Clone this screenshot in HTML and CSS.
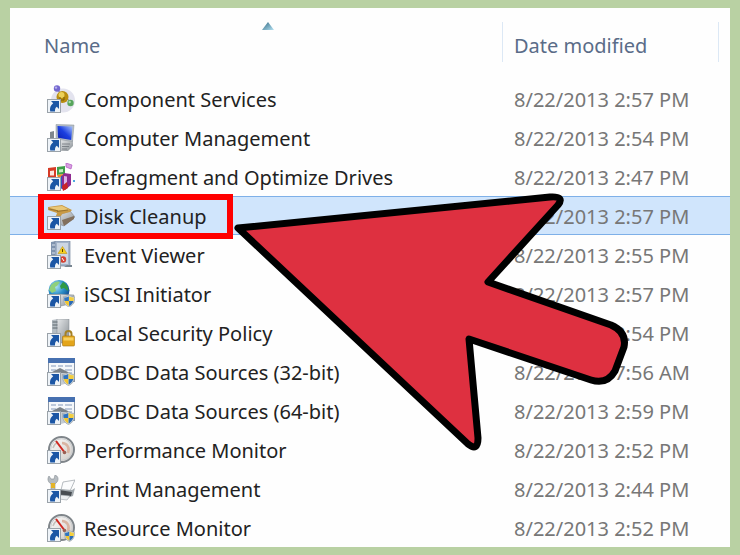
FILE: index.html
```
<!DOCTYPE html>
<html lang="en">
	<head>
		<meta charset="UTF-8">
		<title>Administrative Tools</title>
		<link rel="stylesheet" href="styles.css">
	</head>
	<body>
		<!-- parts shared by the icons -->
		<svg class="defs" width="0" height="0" aria-hidden="true">
			<defs>
				<linearGradient id="metal" x1="0" y1="0" x2="1" y2="1">
					<stop offset="0" stop-color="#e6e8ea"/>
					<stop offset="1" stop-color="#868d92"/>
				</linearGradient>
				<linearGradient id="screen" x1="0" y1="1" x2="1" y2="0">
					<stop offset="0" stop-color="#0a1fb0"/>
					<stop offset="0.5" stop-color="#1b3fe0"/>
					<stop offset="1" stop-color="#a9c4fa"/>
				</linearGradient>
				<linearGradient id="dial" x1="0" y1="0" x2="1" y2="1">
					<stop offset="0" stop-color="#ffffff"/>
					<stop offset="1" stop-color="#cfc9c4"/>
				</linearGradient>
				<radialGradient id="globe" cx="0.35" cy="0.3" r="0.8">
					<stop offset="0" stop-color="#b5e6f5"/>
					<stop offset="0.5" stop-color="#2a8fc9"/>
					<stop offset="1" stop-color="#0d3f86"/>
				</radialGradient>
				<linearGradient id="sort" x1="0" y1="0" x2="1" y2="1">
					<stop offset="0" stop-color="#2f6680"/>
					<stop offset="1" stop-color="#b4e2f3"/>
				</linearGradient>
				<symbol id="shortcut" viewBox="0 0 28 28">
					<rect x="0.5" y="14.5" width="13" height="13" fill="#eef3f8" stroke="#9aa2a9"/>
					<path d="M4 16h8v8l-2.200-2.200c-1.400 1-1.900 2.300-1.800 4.700H3.200c-.7-3.600.3-6.300 3-8.300z" fill="#1b56a5"/>
				</symbol>
				<symbol id="shield" viewBox="0 0 12 12">
					<path d="M6 0c2 1.400 3.800 1.800 5.600 1.800C11.800 7 10 10.500 6 12 2 10.500.2 7 .4 1.800 2.200 1.800 4 1.400 6 0z" fill="#d5dade" stroke="#8e989f" stroke-width="0.6"/>
					<path d="M5.900 1.200v4.800H1.500C1.200 4.800 1.200 4 1.200 2.600 3 2.500 4.400 2.200 5.900 1.200z" fill="#2f74c0"/>
					<path d="M6.100 1.200v4.800h4.400c.3-1.200.3-2 .3-3.400-1.800-.1-3.200-.4-4.700-1.400z" fill="#f4cf3e"/>
					<path d="M5.900 6.100H1.600c.7 2.500 2 4 4.300 5z" fill="#f1c52f"/>
					<path d="M6.100 6.100h4.300c-.7 2.500-2 4-4.300 5z" fill="#2a6ab5"/>
				</symbol>
				<symbol id="component" viewBox="0 0 28 28">
					<ellipse cx="16" cy="15.500" rx="12" ry="12" fill="#e3e3ee"/>
					<path d="M10 4l5 6M19 13l5 4" stroke="#9a9aa8" stroke-width="1.500"/>
					<circle cx="10" cy="3.500" r="3.200" fill="#7468cf"/>
					<circle cx="9" cy="2.600" r="1.200" fill="#b9b3ee"/>
					<circle cx="15.500" cy="12" r="6" fill="#b98d10"/>
					<circle cx="14.500" cy="10" r="3" fill="#ecd058"/>
					<path d="M13 12v3h4v-3" fill="none" stroke="#7d5c06" stroke-width="1"/>
					<circle cx="23.500" cy="18" r="3.200" fill="#57a55c"/>
					<circle cx="22.700" cy="17" r="1.200" fill="#abdca8"/>
				</symbol>
				<symbol id="computer" viewBox="0 0 28 28">
					<path d="M3 8l4-1v7H3z" fill="#7f878d"/>
					<path d="M13 16l13 0v6l-5 5h-8z" fill="url(#metal)"/>
					<path d="M15 20h8M15 22.500h7M15 25h5" stroke="#6e757b" stroke-width="0.8"/>
					<path d="M9 0.500l18 .5-1.500 16.500L9 15z" fill="#b4bcc3" stroke="#8d959b" stroke-width="0.5"/>
					<path d="M10.500 2l15 .5-1.300 13.500-13.200-2.200z" fill="url(#screen)"/>
				</symbol>
				<symbol id="defrag" viewBox="0 0 28 28">
					<path d="M1 5l8-1v10H1z" fill="#d63b26"/>
					<path d="M3 8l4-.5v5H3z" fill="#fbe6df"/>
					<path d="M10 4l8-1v8l-8 1z" fill="#3fa04b"/>
					<path d="M12 6.500l4-.6v3l-4 .6z" fill="#c7edc5"/>
					<path d="M10 12l7-1v8l-4 1z" fill="#f08b22"/>
					<path d="M14 13l6-2v11l-6 4z" fill="#2d55c5"/>
					<path d="M17 10l7 1v11l-6 5-3-1V13z" fill="#8f2b90"/>
					<path d="M17 13l3 .5v7l-3 2z" fill="#dcb4e6"/>
					<path d="M15 23l5-4 1 6-5 3z" fill="#c92626"/>
					<path d="M19 0l6 2-1 4-5-2z" fill="#d79fe0" stroke="#b256c1" stroke-width="0.7"/>
					<path d="M26 17h2v2h-2z" fill="#4fa8e2"/>
				</symbol>
				<symbol id="disk" viewBox="0 0 28 28">
					<path d="M9 14l14-5 5 6-11 9-8-3z" fill="url(#metal)" stroke="#777" stroke-width="0.5"/>
					<path d="M15 18l12-4v3l-10 7z" fill="#82705d"/>
					<path d="M1 5l14-2 10 5-2 2-8 2-2 4-4-2 1-3-9-3z" fill="#c99a45"/>
					<path d="M2 5.500l13-1.500 7 3.500-11 1z" fill="#e9c878"/>
					<path d="M10 9.500l11-1.500M2 7l9 1.800" stroke="#94702b" stroke-width="0.9"/>
				</symbol>
				<symbol id="event" viewBox="0 0 28 28">
					<path d="M4 1l5-1v22H4z" fill="#7f93ae"/>
					<path d="M8 0h15v25H8z" fill="#a3b3c9" stroke="#7889a0" stroke-width="0.7"/>
					<path d="M10 2h11v21H10z" fill="#ccd6e3"/>
					<path d="M5 4h3M5 8h3M5 12h3" stroke="#dce4ee" stroke-width="1.200"/>
					<path d="M15.500 5.500l4.500 7h-9z" fill="#f6cf1f" stroke="#bd941c" stroke-width="0.6"/>
					<path d="M15.500 8v3" stroke="#554400" stroke-width="1"/>
					<circle cx="16" cy="18.500" r="3.200" fill="#d54233"/>
					<path d="M15 17l2 3" stroke="#fff" stroke-width="1"/>
					<path d="M20 24h5v2h-8z" fill="#788590"/>
				</symbol>
				<symbol id="iscsi" viewBox="0 0 28 28">
					<circle cx="12" cy="10.500" r="10.500" fill="url(#globe)"/>
					<path d="M4 5c4-4 8-4 9-3l-3 4-2 1 1 4-4 2-3-3z" fill="#8fd07c"/>
					<path d="M16 2c4 2 6 6 5 9l-4-3-3 1-1-3z" fill="#2f9a44"/>
					<path d="M11 14l16 1v8l-13 3z" fill="url(#metal)" stroke="#7f878d" stroke-width="0.5"/>
					<use href="#shield" x="16" y="15" width="12" height="12"/>
				</symbol>
				<symbol id="policy" viewBox="0 0 28 28">
					<path d="M5 1l6-1v25H5z" fill="#b5bdc3"/>
					<path d="M10 0h12v24H10z" fill="url(#metal)" stroke="#7f878d" stroke-width="0.5"/>
					<path d="M5.500 3h5M5.500 6h5M5.500 9h5" stroke="#5f686f" stroke-width="1"/>
					<path d="M18.500 18v-3a3 3 0 0 1 6 0v3" fill="none" stroke="#a58226" stroke-width="2"/>
					<rect x="15.500" y="17" width="12" height="10" rx="1" fill="#e3a51b" stroke="#a57410" stroke-width="0.6"/>
					<path d="M16.500 18.500h10v3h-10z" fill="#f7d060"/>
				</symbol>
				<symbol id="odbc" viewBox="0 0 28 28">
					<rect x="1.500" y="0.500" width="26" height="23" fill="#f5f8fb" stroke="#8794a6"/>
					<path d="M1 0h27v5H1z" fill="#4670b0"/>
					<path d="M4 8h5M11 8h5M18 8h7M4 12h5M18 12h7M4 15h21" stroke="#a9b8d0" stroke-width="1.500"/>
					<path d="M5 14l8-4 8 4v2H8z" fill="#7b838a"/>
					<path d="M8 15h13v10l-7 2z" fill="#c5ccd2"/>
					<use href="#shield" x="15" y="14" width="13" height="14"/>
				</symbol>
				<symbol id="gauge" viewBox="0 0 28 28">
					<circle cx="14.500" cy="13.500" r="12.500" fill="url(#dial)" stroke="#7f858a" stroke-width="2"/>
					<circle cx="14.500" cy="13.500" r="10.800" fill="none" stroke="#c9cdd0" stroke-width="1"/>
					<path d="M15 7c5 0 8 5 6 10" fill="none" stroke="#d9b4a2" stroke-width="2.500"/>
					<path d="M6 12c1-3 3-5 5-6" fill="none" stroke="#c5c2bd" stroke-width="1.500"/>
					<path d="M9 5l9 12" stroke="#cf2720" stroke-width="2"/>
					<circle cx="17.500" cy="16.500" r="1.800" fill="#9b5f53"/>
				</symbol>
				<symbol id="print" viewBox="0 0 28 28">
					<path d="M2 1l2 3h3l1-4c3 1 4 4 2 7l-2 2v6H4V9C1 7 0 4 2 1z" fill="#b6bcc1" stroke="#858c92" stroke-width="0.6"/>
					<path d="M4 8h4v5H4z" fill="#e3b42a"/>
					<path d="M16 7l12-2-5 11-9-1z" fill="#fbfcfd" stroke="#9aa1a6" stroke-width="0.7"/>
					<path d="M13 14l12 1 3-2-2 8-6 2-8-2z" fill="#a2a9ae"/>
					<path d="M12 15l13 2-1 4-11-1z" fill="#484d52"/>
					<path d="M14 20l9 1-3 4-8-1z" fill="#eceff1" stroke="#8b9298" stroke-width="0.5"/>
				</symbol>
			</defs>
		</svg>

		<div class="window">
			<table class="files">
				<colgroup>
					<col>
					<col class="col-date">
					<col class="col-spare">
				</colgroup>
				<thead>
					<tr>
						<th scope="col" aria-sort="ascending">
							<button type="button" class="sorter">
								<svg class="sort-mark" viewBox="0 0 12 8" aria-hidden="true"><path d="M0 8l6-8 6 8z" fill="url(#sort)"/></svg>
								<span>Name</span>
							</button>
						</th>
						<th scope="col"><button type="button" class="sorter sorter-date">Date modified</button></th>
						<td></td>
					</tr>
				</thead>
				<tbody>
					<tr>
						<td><div class="file"><svg class="icon" aria-hidden="true"><use href="#component"/><use href="#shortcut"/></svg><span>Component Services</span></div></td>
						<td class="date">8/22/2013 2:57 PM</td>
						<td></td>
					</tr>
					<tr>
						<td><div class="file"><svg class="icon" aria-hidden="true"><use href="#computer"/><use href="#shortcut"/></svg><span>Computer Management</span></div></td>
						<td class="date">8/22/2013 2:54 PM</td>
						<td></td>
					</tr>
					<tr>
						<td><div class="file"><svg class="icon" aria-hidden="true"><use href="#defrag"/><use href="#shortcut"/></svg><span>Defragment and Optimize Drives</span></div></td>
						<td class="date">8/22/2013 2:47 PM</td>
						<td></td>
					</tr>
					<tr class="selected">
						<td><div class="file"><svg class="icon" aria-hidden="true"><use href="#disk"/><use href="#shortcut"/></svg><span>Disk Cleanup</span></div></td>
						<td class="date">8/22/2013 2:57 PM</td>
						<td></td>
					</tr>
					<tr>
						<td><div class="file"><svg class="icon" aria-hidden="true"><use href="#event"/><use href="#shortcut"/></svg><span>Event Viewer</span></div></td>
						<td class="date">8/22/2013 2:55 PM</td>
						<td></td>
					</tr>
					<tr>
						<td><div class="file"><svg class="icon" aria-hidden="true"><use href="#iscsi"/><use href="#shortcut"/></svg><span>iSCSI Initiator</span></div></td>
						<td class="date">8/22/2013 2:57 PM</td>
						<td></td>
					</tr>
					<tr>
						<td><div class="file"><svg class="icon" aria-hidden="true"><use href="#policy"/><use href="#shortcut"/></svg><span>Local Security Policy</span></div></td>
						<td class="date">8/22/2013 2:54 PM</td>
						<td></td>
					</tr>
					<tr>
						<td><div class="file"><svg class="icon" aria-hidden="true"><use href="#odbc"/><use href="#shortcut"/></svg><span>ODBC Data Sources (32-bit)</span></div></td>
						<td class="date">8/22/2013 7:56 AM</td>
						<td></td>
					</tr>
					<tr>
						<td><div class="file"><svg class="icon" aria-hidden="true"><use href="#odbc"/><use href="#shortcut"/></svg><span>ODBC Data Sources (64-bit)</span></div></td>
						<td class="date">8/22/2013 2:59 PM</td>
						<td></td>
					</tr>
					<tr>
						<td><div class="file"><svg class="icon" aria-hidden="true"><use href="#gauge"/><use href="#shortcut"/></svg><span>Performance Monitor</span></div></td>
						<td class="date">8/22/2013 2:52 PM</td>
						<td></td>
					</tr>
					<tr>
						<td><div class="file"><svg class="icon" aria-hidden="true"><use href="#print"/><use href="#shortcut"/></svg><span>Print Management</span></div></td>
						<td class="date">8/22/2013 2:44 PM</td>
						<td></td>
					</tr>
					<tr>
						<td><div class="file"><svg class="icon" aria-hidden="true"><use href="#gauge"/><use href="#shield" x="17" y="16" width="11" height="12"/><use href="#shortcut"/></svg><span>Resource Monitor</span></div></td>
						<td class="date">8/22/2013 2:52 PM</td>
						<td></td>
					</tr>
				</tbody>
			</table>

			<!-- marks over the list -->
			<div class="highlight"></div>
			<svg class="pointer" viewBox="230 190 402 264" aria-hidden="true">
				<path d="M238 228L550 197Q565 196 558 205L488 282L611 325Q627 332 624 347L615 371Q607 385 591 380L469 339L478 438Q478 452 468 444Z" fill="#de3040" stroke="#000" stroke-width="7" stroke-linejoin="round"/>
			</svg>
		</div>
	</body>
</html>
```
FILE: styles.css
```
body {
	margin: 0;
	padding: 8px 10px;
	background: #b9d1a3;
	font-family: "Noto Sans", "Open Sans", sans-serif;
	font-size: 20px;
	line-height: 28px;
	color: #222;
}

.defs {
	position: absolute;
}

.window {
	position: relative;
	background: #fefefe;
}

.files {
	width: 100%;
	table-layout: fixed;
	border-collapse: collapse;
}

.files th,
.files td {
	padding: 0;
	text-align: left;
	font-weight: normal;
	white-space: nowrap;
}

.col-date {
	width: 216px;
}

.col-spare {
	width: 11px;
}

/* header */
.files thead tr {
	height: 71px;
	vertical-align: top;
}

.files thead th {
	padding-top: 14px;
}

.sorter {
	display: flex;
	flex-direction: column;
	gap: 2px;
	width: 100%;
	height: 40px;
	padding: 0 10px 0 34px;
	border: 0;
	border-right: 1px solid #dce8f5;
	background: none;
	font: inherit;
	color: #5a6c88;
	text-align: left;
}

.sorter-date {
	padding: 10px 0 0 11px;
}

.sort-mark {
	align-self: center;
	width: 12px;
	height: 8px;
}

/* rows */
.files tbody tr {
	height: 39px;
}

.file {
	display: flex;
	align-items: center;
	gap: 9px;
	padding-left: 37px;
}

.file span {
	padding-top: 2px;
}

.icon {
	width: 28px;
	height: 28px;
}

.files .date {
	padding: 2px 0 0 11px;
	color: #777;
}

.selected {
	background: #d0e5fc;
	box-shadow: inset 0 1px #7eb0e8, inset 0 -1px #7eb0e8;
}

/* marks */
.highlight {
	position: absolute;
	left: 28px;
	top: 186px;
	box-sizing: border-box;
	width: 195px;
	height: 45px;
	border: 6px solid #f00;
}

.pointer {
	position: absolute;
	left: 220px;
	top: 182px;
	width: 402px;
	height: 264px;
}
```
